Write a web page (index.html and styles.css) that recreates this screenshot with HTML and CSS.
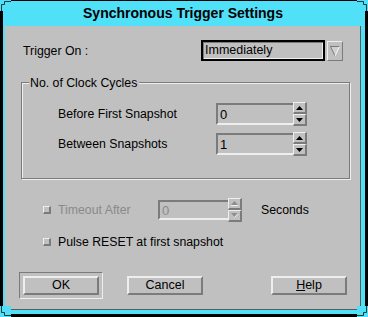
FILE: index.html
```html
<!DOCTYPE html>
<html>
<head>
<meta charset="utf-8">
<title>Synchronous Trigger Settings</title>
<link rel="stylesheet" href="styles.css">
</head>
<body>
<div class="screen">
  <div class="wm">
    <div class="titlebar">Synchronous Trigger Settings</div>
    <div class="panel">
      <div class="row-trigger">
        <span class="label-trigger">Trigger On :</span>
        <div class="combo"><span class="combo-text">Immediately</span></div>
        <div class="combo-arrow">
          <svg width="14" height="18" viewBox="0 0 14 18">
            <polygon points="2,4 12,4 7,14" fill="#d0d0d0"/>
            <line x1="2" y1="4.5" x2="12" y2="4.5" stroke="#7b7b7b" stroke-width="1"/>
            <line x1="2.5" y1="4.5" x2="7" y2="14" stroke="#7b7b7b" stroke-width="1"/>
            <line x1="11.5" y1="4.5" x2="7" y2="14" stroke="#f4f4f4" stroke-width="1"/>
          </svg>
        </div>
      </div>

      <fieldset class="group">
        <legend class="group-title">No. of Clock Cycles</legend>
        <div class="group-body">
          <div class="spin-row">
            <span class="spin-label">Before First Snapshot</span>
            <div class="spinner">
              <div class="spin-field"><span class="spin-value">0</span></div>
              <div class="spin-btns">
                <div class="spin-btn"><svg width="7" height="4" viewBox="0 0 7 4"><polygon points="0,4 3.5,0 7,4" fill="#000"/></svg></div>
                <div class="spin-btn"><svg width="7" height="4" viewBox="0 0 7 4"><polygon points="0,0 3.5,4 7,0" fill="#000"/></svg></div>
              </div>
            </div>
          </div>
          <div class="spin-row spin-row-second">
            <span class="spin-label">Between Snapshots</span>
            <div class="spinner">
              <div class="spin-field"><span class="spin-value">1</span></div>
              <div class="spin-btns">
                <div class="spin-btn"><svg width="7" height="4" viewBox="0 0 7 4"><polygon points="0,4 3.5,0 7,4" fill="#000"/></svg></div>
                <div class="spin-btn"><svg width="7" height="4" viewBox="0 0 7 4"><polygon points="0,0 3.5,4 7,0" fill="#000"/></svg></div>
              </div>
            </div>
          </div>
        </div>
      </fieldset>

      <div class="row-timeout">
        <span class="checkbox"></span>
        <span class="check-label disabled timeout-label">Timeout After</span>
        <div class="spinner">
          <div class="spin-field spin-field-small"><span class="spin-value disabled">0</span></div>
          <div class="spin-btns">
            <div class="spin-btn"><svg width="7" height="5" viewBox="0 0 7 5"><polygon points="0,4 3.5,0 7,4" fill="#8e8e8e"/><line x1="0" y1="4.5" x2="7" y2="4.5" stroke="#f0f0f0"/></svg></div>
            <div class="spin-btn"><svg width="7" height="5" viewBox="0 0 7 5"><polygon points="0,0 3.5,4 7,0" fill="#8e8e8e"/><line x1="3.5" y1="4.5" x2="7" y2="0.5" stroke="#f0f0f0"/></svg></div>
          </div>
        </div>
        <span class="seconds">Seconds</span>
      </div>

      <div class="row-pulse">
        <span class="checkbox"></span>
        <span class="check-label">Pulse RESET at first snapshot</span>
      </div>

      <div class="buttons">
        <div class="default-frame"><div class="btn">OK</div></div>
        <div class="btn btn-cancel">Cancel</div>
        <div class="btn btn-help"><span class="mnemonic">H</span>elp</div>
      </div>
    </div>
  </div>

  <svg class="corner corner-tl" width="11" height="11" viewBox="0 0 11 11">
    <rect x="0" y="0" width="11" height="11" fill="#50e0f8"/>
    <polyline points="11,1.5 4.5,1.5 4.5,4.5 1.5,4.5 1.5,11" fill="none" stroke="#1d3a40" stroke-width="1"/>
  </svg>
  <svg class="corner corner-tr" width="11" height="11" viewBox="0 0 11 11">
    <rect x="0" y="0" width="11" height="11" fill="#50e0f8"/>
    <polyline points="0,1.5 6.5,1.5 6.5,4.5 9.5,4.5 9.5,11" fill="none" stroke="#1d3a40" stroke-width="1"/>
  </svg>
  <svg class="corner corner-bl" width="11" height="11" viewBox="0 0 11 11">
    <rect x="0" y="0" width="11" height="11" fill="#50e0f8"/>
    <polyline points="1.5,0 1.5,6.5 4.5,6.5 4.5,9.5 11,9.5" fill="none" stroke="#1d3a40" stroke-width="1"/>
  </svg>
  <svg class="corner corner-br" width="11" height="11" viewBox="0 0 11 11">
    <rect x="0" y="0" width="11" height="11" fill="#50e0f8"/>
    <polyline points="9.5,0 9.5,6.5 6.5,6.5 6.5,9.5 0,9.5" fill="none" stroke="#1d3a40" stroke-width="1"/>
  </svg>
</div>
</body>
</html>
```

FILE: styles.css
```css
html, body {
  margin: 0;
  padding: 0;
  background: #000;
}

body {
  font-family: "Liberation Sans", Arial, sans-serif;
  font-size: 12.3px;
  color: #000;
}

.screen {
  position: relative;
  width: 368px;
  height: 317px;
  box-sizing: border-box;
  padding: 1px 3px 3px 3px;
  background: #000;
}

.wm {
  width: 362px;
  height: 313px;
  box-sizing: border-box;
  padding: 0 4px 4px 2px;
  background: #50e0f8;
  display: flex;
  flex-direction: column;
}

.titlebar {
  height: 25px;
  line-height: 24px;
  text-align: center;
  font-weight: bold;
  font-size: 14px;
  color: #000;
  flex: none;
}

.panel {
  flex: 1;
  background: #c0c0c0;
  box-sizing: border-box;
  border-right: 1px solid #5a5a5a;
  border-bottom: 1px solid #5a5a5a;
  padding-top: 14px;
  display: flex;
  flex-direction: column;
}

/* Trigger row */
.row-trigger {
  display: flex;
  align-items: center;
  height: 21px;
  padding-left: 18px;
}

.label-trigger {
  width: 178px;
}

.combo {
  width: 124px;
  height: 21px;
  box-sizing: border-box;
  border: 2px solid #000;
  box-shadow: inset 1px 1px 0 #7b7b7b, inset -1px -1px 0 #eeeeee;
  display: flex;
  align-items: center;
  padding-left: 2px;
}

.combo-text {
  font-size: 12.5px;
  line-height: 15px;
}

.combo-arrow {
  margin-left: 2px;
  width: 16px;
  height: 20px;
  box-sizing: border-box;
  border: 1px solid;
  border-color: #eeeeee #7b7b7b #7b7b7b #eeeeee;
  display: flex;
  align-items: center;
  justify-content: center;
}

.combo-arrow svg {
  display: block;
}

/* Group box */
.group {
  margin: 13px 0 0 16px;
  width: 329px;
  box-sizing: border-box;
  border: 1px solid #7b7b7b;
  box-shadow: inset 1px 1px 0 #eeeeee, 1px 1px 0 #eeeeee;
  padding: 12px 0 22px 0;
  min-width: 0;
}

.group-title {
  margin-left: 7px;
  padding: 3px 2px 0 1px;
  line-height: 13px;
  background: #c0c0c0;
}

.group-body {
  padding-left: 36px;
  display: flex;
  flex-direction: column;
}

.spin-row {
  display: flex;
  align-items: center;
  height: 24px;
}

.spin-row-second {
  margin-top: 6px;
}

.spin-label {
  width: 158px;
}

/* Spinner */
.spinner {
  display: flex;
  align-items: center;
}

.spin-field {
  width: 77px;
  height: 22px;
  box-sizing: border-box;
  border-top: 2px solid #7b7b7b;
  border-left: 2px solid #7b7b7b;
  border-bottom: 2px solid #eeeeee;
  display: flex;
  align-items: center;
  padding-left: 2px;
}

.spin-field-small {
  width: 70px;
  height: 20px;
}

.spin-value {
  font-size: 13px;
  line-height: 15px;
}

.spin-btns {
  display: flex;
  flex-direction: column;
  width: 14px;
}

.spin-btn {
  width: 14px;
  height: 12px;
  box-sizing: border-box;
  border-top: 1px solid #eeeeee;
  border-left: 1px solid #eeeeee;
  border-right: 2px solid #7b7b7b;
  border-bottom: 2px solid #7b7b7b;
  display: flex;
  align-items: center;
  justify-content: center;
}

.spin-btn svg {
  display: block;
}

/* Check rows */
.row-timeout {
  display: flex;
  align-items: center;
  height: 22px;
  margin-top: 20px;
  padding-left: 38px;
}

.row-pulse {
  display: flex;
  align-items: center;
  height: 16px;
  margin-top: 13px;
  padding-left: 38px;
}

.checkbox {
  width: 8px;
  height: 8px;
  box-sizing: border-box;
  border-top: 1px solid #eeeeee;
  border-left: 1px solid #eeeeee;
  border-right: 2px solid #7b7b7b;
  border-bottom: 2px solid #7b7b7b;
  background: #c0c0c0;
  flex: none;
}

.check-label {
  margin-left: 7px;
}

.timeout-label {
  width: 100px;
}

.disabled {
  color: #8a8a8a;
}

.seconds {
  margin-left: 19px;
}

/* Buttons */
.buttons {
  display: flex;
  align-items: center;
  height: 27px;
  margin-top: 22px;
  padding-left: 14px;
}

.default-frame {
  width: 84px;
  height: 27px;
  box-sizing: border-box;
  border: 1px solid;
  border-color: #7b7b7b #eeeeee #eeeeee #7b7b7b;
  display: flex;
  align-items: center;
  justify-content: center;
}

.btn {
  width: 76px;
  height: 19px;
  box-sizing: border-box;
  border: 2px solid;
  border-color: #eeeeee #7b7b7b #7b7b7b #eeeeee;
  background: #c0c0c0;
  display: flex;
  align-items: center;
  justify-content: center;
  font-size: 12.5px;
  line-height: 15px;
}

.btn-cancel {
  margin-left: 24px;
}

.btn-help {
  margin-left: 68px;
}

.mnemonic {
  text-decoration: underline;
}

/* Window manager corner handles (overlay the frame) */
.corner {
  position: absolute;
  display: block;
}

.corner-tl { left: 0; top: 0; }
.corner-tr { right: 0; top: 0; }
.corner-bl { left: 0; bottom: 0; }
.corner-br { right: 0; bottom: 0; }
```
